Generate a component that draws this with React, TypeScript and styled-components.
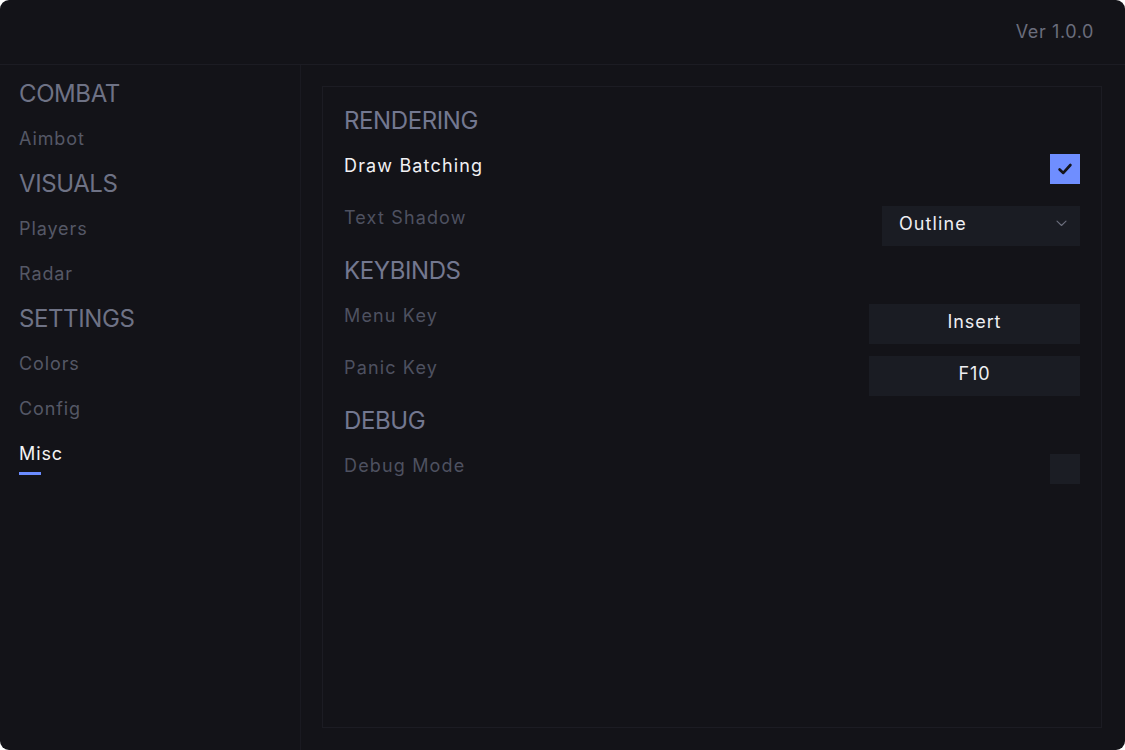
import React from "react";
import styled, { createGlobalStyle } from "styled-components";

const Global = createGlobalStyle`
  html, body { margin: 0; padding: 0; background: #ffffff; }
  body { font-family: Inter, "Noto Sans", sans-serif; -webkit-font-smoothing: antialiased; }
  * { box-sizing: border-box; }
`;

const Window = styled.div`
  width: 1125px;
  height: 750px;
  background: #131318;
  border-radius: 9px;
  overflow: hidden;
  display: flex;
  flex-direction: column;
`;

const Header = styled.header`
  height: 65px;
  flex: none;
  border-bottom: 1px solid #1c1c23;
  display: flex;
  align-items: center;
  justify-content: flex-end;
  padding: 0 31px 2px 0;
`;

const Version = styled.span`
  font-size: 18px;
  color: #6a6d7c;
  letter-spacing: 0.6px;
`;

const Body = styled.div`
  flex: 1;
  display: grid;
  grid-template-columns: 301px 1fr;
  min-height: 0;
`;

const Sidebar = styled.nav`
  border-right: 1px solid #1a1a21;
  padding: 6px 0 0 19px;
  display: flex;
  flex-direction: column;
`;

const NavGroup = styled.div`
  height: 45px;
  display: flex;
  align-items: center;
  font-size: 24px;
  color: #6e7285;
  letter-spacing: -0.4px;
`;

const NavItem = styled.div<{ $active?: boolean }>`
  position: relative;
  height: 45px;
  display: flex;
  align-items: center;
  font-size: 18px;
  letter-spacing: 0.9px;
  color: ${(p) => (p.$active ? "#f3f3f5" : "#555866")};
  &::after {
    content: "";
    display: ${(p) => (p.$active ? "block" : "none")};
    position: absolute;
    left: 0;
    top: 41px;
    width: 22px;
    height: 3px;
    background: #6b8cff;
  }
`;

const Content = styled.main`
  padding: 21px 23px 22px 21px;
  display: flex;
`;

const Panel = styled.section`
  flex: 1;
  border: 1px solid #1c1c23;
  padding: 18px 21px 0 21px;
  display: flex;
  flex-direction: column;
`;

const Section = styled.div`
  display: flex;
  flex-direction: column;
  gap: 12px;
  margin-bottom: 9px;
`;

const SectionTitle = styled.h2`
  margin: 0 0 7px 0;
  height: 30px;
  line-height: 32px;
  font-size: 24px;
  font-weight: 400;
  color: #737890;
  letter-spacing: -0.4px;
`;

const Row = styled.div`
  min-height: 40px;
  display: flex;
  align-items: flex-start;
  justify-content: space-between;
`;

const Label = styled.span<{ $on?: boolean }>`
  padding-top: 1px;
  line-height: 22px;
  font-size: 18px;
  letter-spacing: 1.15px;
  color: ${(p) => (p.$on ? "#f1f1f4" : "#4e5160")};
`;

const Check = styled.div<{ $checked?: boolean }>`
  width: 30px;
  height: 30px;
  background: ${(p) => (p.$checked ? "#6f8eff" : "#1b1d24")};
  display: flex;
  align-items: center;
  justify-content: center;
`;

const Select = styled.div`
  width: 198px;
  height: 40px;
  background: #1a1c23;
  display: flex;
  align-items: center;
  justify-content: space-between;
  padding: 0 13px 6px 17px;
  font-size: 18px;
  letter-spacing: 1.1px;
  color: #eeeef2;
`;

const KeyBox = styled.div`
  width: 211px;
  height: 40px;
  background: #1a1c23;
  display: flex;
  align-items: center;
  justify-content: center;
  padding-bottom: 5px;
  font-size: 18px;
  letter-spacing: 0.9px;
  color: #eeeef2;
`;

const CheckMark = () => (
  <svg width="16" height="16" viewBox="0 0 16 16" fill="none">
    <path d="M2.6 8.4 L6.3 11.9 L13.4 4" stroke="#15151b" strokeWidth="2.7" strokeLinecap="round" strokeLinejoin="round" />
  </svg>
);

const Chevron = () => (
  <svg width="11" height="7" viewBox="0 0 11 7" fill="none">
    <path d="M1 1.2 L5.5 5.5 L10 1.2" stroke="#6b6e7c" strokeWidth="1.1" strokeLinecap="round" strokeLinejoin="round" />
  </svg>
);

export default function App() {
  return (
    <>
      <Global />
      <Window>
        <Header>
          <Version>Ver 1.0.0</Version>
        </Header>
        <Body>
          <Sidebar>
            <NavGroup>COMBAT</NavGroup>
            <NavItem>Aimbot</NavItem>
            <NavGroup>VISUALS</NavGroup>
            <NavItem>Players</NavItem>
            <NavItem>Radar</NavItem>
            <NavGroup>SETTINGS</NavGroup>
            <NavItem>Colors</NavItem>
            <NavItem>Config</NavItem>
            <NavItem $active>Misc</NavItem>
          </Sidebar>
          <Content>
            <Panel>
              <Section>
                <SectionTitle>RENDERING</SectionTitle>
                <Row>
                  <Label $on>Draw Batching</Label>
                  <Check $checked>
                    <CheckMark />
                  </Check>
                </Row>
                <Row>
                  <Label>Text Shadow</Label>
                  <Select>
                    <span>Outline</span>
                    <Chevron />
                  </Select>
                </Row>
              </Section>
              <Section>
                <SectionTitle>KEYBINDS</SectionTitle>
                <Row>
                  <Label>Menu Key</Label>
                  <KeyBox>Insert</KeyBox>
                </Row>
                <Row>
                  <Label>Panic Key</Label>
                  <KeyBox>F10</KeyBox>
                </Row>
              </Section>
              <Section>
                <SectionTitle>DEBUG</SectionTitle>
                <Row>
                  <Label>Debug Mode</Label>
                  <Check />
                </Row>
              </Section>
            </Panel>
          </Content>
        </Body>
      </Window>
    </>
  );
}
